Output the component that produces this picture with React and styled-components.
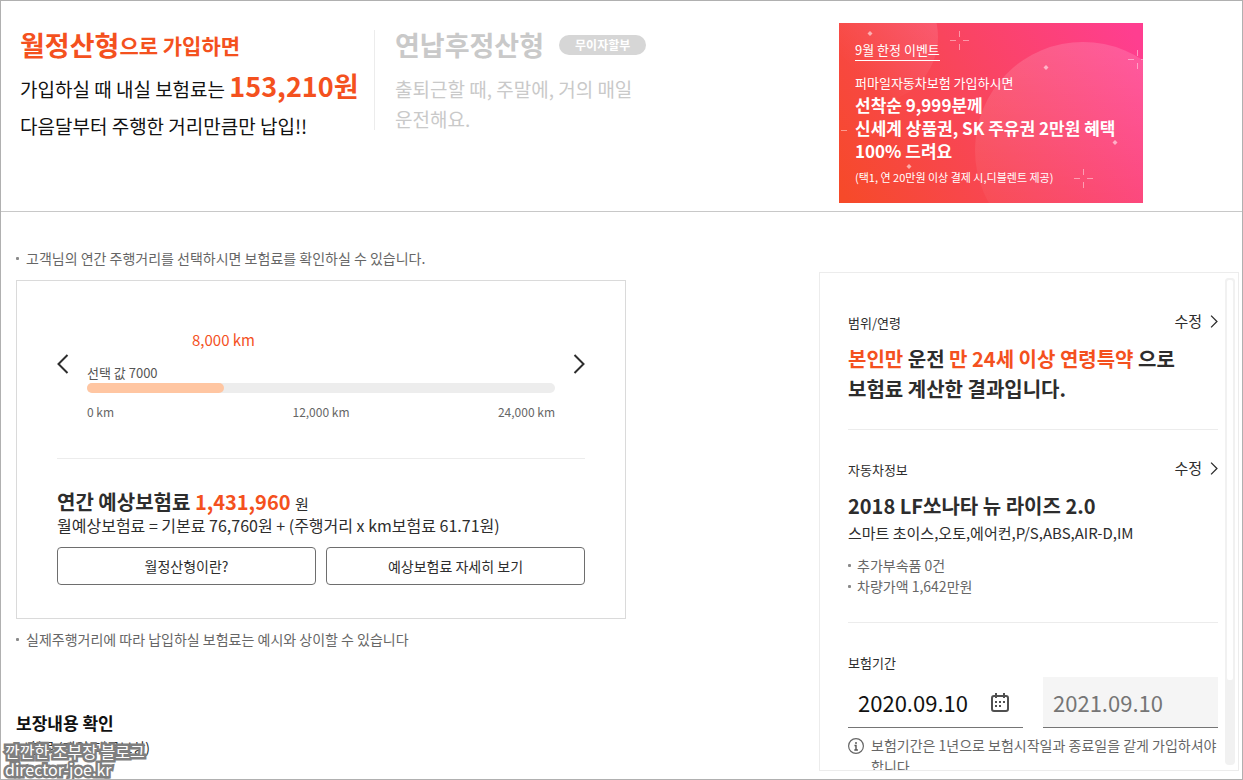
import React, { useState } from "react"
import styled, { ThemeProvider, createGlobalStyle } from "styled-components"

const theme = {
  colors: {
    accent: "#f4511e",
    dark: "#2d2d2d",
    black: "#111111",
    text: "#666666",
    muted: "#c9c9c9",
    border: "#dadada",
    line: "#ececec",
    frame: "#b0b0b0",
  },
}

const GlobalStyle = createGlobalStyle`
  * {
    box-sizing: border-box;
  }

  body {
    margin: 0;
    background: #fff;
  }

  body, button, input {
    font-family: "Noto Sans CJK KR", "Noto Sans", sans-serif;
  }

  h2, h3, p {
    margin: 0;
    padding: 0;
  }
`

const Page = styled.div`
  position: relative;
  display: flex;
  flex-direction: column;
  height: 100vh;
  border: 1px solid ${({ theme }) => theme.colors.frame};
  overflow: hidden;
  color: ${({ theme }) => theme.colors.dark};
`

const Header = styled.header`
  display: flex;
  align-items: flex-start;
  flex-shrink: 0;
  padding: 22px 99px 8px 19px;
  border-bottom: 1px solid #c8c8c8;
`

const Plan = styled.section`
  width: ${({ $wide }) => ($wide ? "354px" : "290px")};
  min-height: 100px;
  margin-top: 7px;
  color: ${({ theme, $off }) => ($off ? theme.colors.muted : theme.colors.black)};
`

const Plans = styled.div`
  display: flex;
  flex: 1;
`

const Divider = styled.div`
  width: 1px;
  height: 100px;
  margin-top: 7px;
  margin-right: 20px;
  background: ${({ theme }) => theme.colors.line};
`

const PlanTitle = styled.h2`
  display: flex;
  align-items: center;
  height: 30px;
  font-size: 27px;
  font-weight: 700;
  line-height: 30px;
  color: ${({ theme, $active }) => ($active ? theme.colors.accent : "inherit")};
`

const PlanSuffix = styled.span`
  font-size: 21px;
  font-weight: 700;
`

const PlanText = styled.p`
  margin-top: ${({ $tall }) => ($tall ? "10px" : "14px")};
  font-size: 19px;
  line-height: ${({ $tall }) => ($tall ? "37px" : "30px")};
`

const Price = styled.strong`
  font-size: 27px;
  font-weight: 700;
  line-height: 30px;
  color: ${({ theme }) => theme.colors.accent};
`

const Badge = styled.span`
  height: 20px;
  margin-left: 15px;
  padding: 0 16px;
  border-radius: 10px;
  background: #d6d6d6;
  color: #fff;
  font-size: 12px;
  font-weight: 700;
  line-height: 20px;
`

const BannerLink = styled.a`
  display: grid;
  flex-shrink: 0;
  width: 304px;
  height: 180px;
  overflow: hidden;
  color: #fff;
  text-decoration: none;
`

const BannerArt = styled.svg`
  grid-area: 1 / 1;
  width: 100%;
  height: 100%;
`

const BannerBody = styled.div`
  grid-area: 1 / 1;
  padding: 17px 16px 0;
  z-index: 1;
`

const BannerTag = styled.p`
  width: max-content;
  border-bottom: 1px solid #fff;
  font-size: 13px;
  line-height: 20px;
`

const BannerLead = styled.p`
  margin-top: 12px;
  font-size: 13px;
  line-height: 20px;
`

const BannerTitle = styled.p`
  font-size: 17px;
  font-weight: 700;
  line-height: 23px;
  white-space: nowrap;
`

const BannerSmall = styled.p`
  margin-top: 5px;
  font-size: 11px;
  line-height: 20px;
`

const Main = styled.main`
  display: flex;
  justify-content: space-between;
  flex: 1;
  min-height: 0;
  padding-left: 15px;
`

const Content = styled.div`
  flex: 0 1 610px;
  padding-top: 36px;
`

const Note = styled.p`
  display: flex;
  align-items: center;
  gap: ${({ $gap }) => $gap || "7px"};
  font-size: 14px;
  line-height: ${({ $height }) => $height || "20px"};
  color: ${({ theme }) => theme.colors.text};

  &::before {
    content: "";
    flex-shrink: 0;
    width: 3px;
    height: 3px;
    border-radius: 1px;
    background: #8a8a8a;
  }
`

const Card = styled.section`
  margin: 12px 0 10px;
  padding: 47px 40px 33px;
  border: 1px solid ${({ theme }) => theme.colors.border};
`

const Picker = styled.div`
  display: flex;
  align-items: flex-start;
  gap: 18px;
  padding-bottom: 36px;
  border-bottom: 1px solid ${({ theme }) => theme.colors.line};
`

const ArrowButton = styled.button`
  width: 12px;
  margin-top: 26px;
  padding: 0;
  border: 0;
  background: none;
  cursor: pointer;

  svg {
    display: block;
  }
`

const Slider = styled.div`
  flex: 1;
`

const Distance = styled.output`
  display: block;
  width: max-content;
  transform: translateX(-50%);
  font-size: 15px;
  line-height: 24px;
  color: ${({ theme }) => theme.colors.accent};
`

const SliderLabel = styled.label`
  display: block;
  margin-top: 11px;
  font-size: 13px;
  line-height: 20px;
  color: #555;
`

const Track = styled.div`
  display: grid;
  height: 10px;
  border-radius: 5px;
  background: #ededed;
`

const Fill = styled.div`
  grid-area: 1 / 1;
  border-radius: 5px;
  background: #ffc6a2;
`

const Range = styled.input`
  grid-area: 1 / 1;
  width: 100%;
  height: 10px;
  margin: 0;
  opacity: 0;
  cursor: pointer;
`

const Scale = styled.div`
  display: grid;
  grid-template-columns: 1fr 1fr 1fr;
  margin-top: 9px;
  font-size: 12px;
  line-height: 20px;
  text-align: center;
  color: ${({ theme }) => theme.colors.text};

  span:first-child {
    text-align: left;
  }

  span:last-child {
    text-align: right;
  }
`

const Estimate = styled.p`
  margin-top: 30px;
  font-size: 20px;
  font-weight: 700;
  line-height: 25px;
`

const Unit = styled.span`
  font-size: 15px;
  font-weight: 400;
  line-height: 1;
`

const Accent = styled.span`
  color: ${({ theme }) => theme.colors.accent};
`

const Formula = styled.p`
  font-size: 16px;
  line-height: 22px;
`

const Buttons = styled.div`
  display: grid;
  grid-template-columns: 1fr 1fr;
  gap: 10px;
  margin-top: 11px;
`

const OutlineButton = styled.button`
  height: 38px;
  border: 1px solid #6e6e6e;
  border-radius: 4px;
  background: #fff;
  color: ${({ theme }) => theme.colors.dark};
  font-size: 14px;
  cursor: pointer;
`

const SectionTitle = styled.h2`
  margin-top: 62px;
  font-size: 17px;
  font-weight: 700;
  line-height: 24px;
  color: ${({ theme }) => theme.colors.black};
`

const SectionText = styled.p`
  margin-top: 2px;
  font-size: 14px;
  line-height: 20px;
`

const Panel = styled.aside`
  display: flex;
  flex: 0 0 420px;
  min-width: 0;
  margin: 60px 3px 8px 0;
  border: 1px solid ${({ theme }) => theme.colors.line};
`

const PanelBody = styled.div`
  flex: 1;
  min-width: 0;
  padding: 10px 7px 0 28px;
  overflow: hidden;
`

const ScrollTrack = styled.div`
  width: 10px;
  margin: 5px 3px 5px 0;
  border-radius: 4px;
  background: #f1f1f1;
`

const ScrollThumb = styled.div`
  height: 83%;
  border: 2px solid #f1f1f1;
  border-radius: 4px;
  background: #fff;
`

const PanelSection = styled.section`
  padding: 28px 0 25px;

  & + & {
    border-top: 1px solid ${({ theme }) => theme.colors.line};
  }
`

const PanelHead = styled.div`
  display: flex;
  align-items: center;
  justify-content: space-between;
  height: 24px;
  padding-bottom: 2px;
  font-size: 13px;
`

const EditButton = styled.button`
  display: flex;
  align-items: center;
  gap: 8px;
  padding: 0 0 2px;
  border: 0;
  background: none;
  color: ${({ theme }) => theme.colors.dark};
  font-size: 15px;
  line-height: 20px;
  cursor: pointer;
`

const PanelTitle = styled.h3`
  margin-top: 9px;
  font-size: 20px;
  font-weight: 700;
  line-height: 30px;
`

const PanelText = styled.p`
  margin: 0 0 10px;
  font-size: 15px;
  line-height: 24px;
`

const Dates = styled.div`
  display: grid;
  grid-template-columns: 1fr 1fr;
  gap: 20px;
  margin-top: 2px;
`

const DateField = styled.div`
  display: flex;
  align-items: center;
  min-width: 0;
  height: 51px;
  padding: 0 13px 0 10px;
  border-bottom: 1px solid #757575;
  background: ${({ $off }) => ($off ? "#f5f5f5" : "#fff")};

  input {
    flex: 1;
    width: 100%;
    min-width: 0;
    padding: 0;
    border: 0;
    background: none;
    color: ${({ $off }) => ($off ? "#757575" : "#111")};
    font-size: 22px;
  }
`

const IconButton = styled.button`
  padding: 0;
  border: 0;
  background: none;
  cursor: pointer;

  svg {
    display: block;
  }
`

const Info = styled.p`
  display: flex;
  gap: 7px;
  margin-top: 7px;
  font-size: 14px;
  line-height: 21px;
  color: ${({ theme }) => theme.colors.text};

  svg {
    flex-shrink: 0;
    margin-top: 3px;
  }

  span {
    white-space: nowrap;
  }
`

const Watermark = styled.div`
  position: absolute;
  left: 4px;
  bottom: 1px;
  color: #fff;
  font-family: "Noto Sans CJK KR", sans-serif;
  font-size: 16px;
  line-height: 18px;
  -webkit-text-stroke: 5px #7f7f7f;
  stroke-linejoin: round;
  paint-order: stroke fill;
`

const Chevron = ({ left, width, height }) => (
  <svg width={width} height={height} viewBox="0 0 12 20" fill="none" aria-hidden="true">
    <path d={left ? "M10.5 1 L1.5 10 L10.5 19" : "M1.5 1 L10.5 10 L1.5 19"} stroke="#2d2d2d" strokeWidth="2" />
  </svg>
)

const CalendarIcon = () => (
  <svg width="20" height="20" viewBox="0 0 20 20" fill="none" aria-hidden="true">
    <rect x="2" y="4" width="16" height="15" rx="2" stroke="#505050" strokeWidth="2" />
    <path d="M6 1v5M14 1v5" stroke="#505050" strokeWidth="2" />
    <path d="M9 10h2M13 10h2M5 10h2M5 14h2M9 14h2" stroke="#505050" strokeWidth="2" />
  </svg>
)

const InfoIcon = () => (
  <svg width="16" height="16" viewBox="0 0 16 16" fill="none" aria-hidden="true">
    <circle cx="8" cy="8" r="7.4" stroke="#666" strokeWidth="1.2" />
    <path d="M8 4v2M6.5 7.5H8V12M6.3 12h3.6" stroke="#555" strokeWidth="1.4" />
  </svg>
)

const sparkles = [
  [120, 17],
  [298, 36],
  [244, 155],
  [-2, 107],
]

const dots = [
  [31, 10],
  [207, 44],
  [276, 119],
  [70, 143],
]

const Banner = () => (
  <BannerLink href="#event">
    <BannerArt viewBox="0 0 304 180" preserveAspectRatio="none" aria-hidden="true">
      <defs>
        <linearGradient id="bannerBg" gradientUnits="userSpaceOnUse" x1="0" y1="170" x2="290" y2="0">
          <stop offset="0" stopColor="#f64a29" />
          <stop offset="0.5" stopColor="#f9455d" />
          <stop offset="1" stopColor="#ff3e90" />
        </linearGradient>
        <linearGradient id="bannerGlow" x1="0" y1="1" x2="1" y2="0">
          <stop offset="0.3" stopColor="#fff" stopOpacity="0" />
          <stop offset="1" stopColor="#fff" stopOpacity="0.16" />
        </linearGradient>
        <linearGradient id="bannerMoon" x1="0" y1="0" x2="0" y2="1">
          <stop offset="0" stopColor="#fff" stopOpacity="0.15" />
          <stop offset="0.8" stopColor="#fff" stopOpacity="0.03" />
        </linearGradient>
      </defs>
      <rect width="304" height="180" fill="url(#bannerBg)" />
      <circle cx="33" cy="14" r="66" fill="url(#bannerGlow)" />
      <circle cx="244" cy="127" r="108" fill="url(#bannerMoon)" />
      {sparkles.map(([x, y]) => (
        <path
          key={`${x}-${y}`}
          d={`M${x - 9} ${y + 0.5}h6M${x + 4} ${y + 0.5}h6M${x + 0.5} ${y - 9}v6M${x + 0.5} ${y + 4}v6`}
          stroke="#fff"
          strokeOpacity="0.45"
        />
      ))}
      {dots.map(([x, y]) => (
        <path key={`${x}-${y}`} d={`M${x} ${y - 2}l2.5 2.5l-2.5 2.5l-2.5 -2.5z`} fill="#fff" fillOpacity="0.55" />
      ))}
    </BannerArt>
    <BannerBody>
      <BannerTag>9월 한정 이벤트</BannerTag>
      <BannerLead>퍼마일자동차보험 가입하시면</BannerLead>
      <BannerTitle>
        선착순 9,999분께<br />
        신세계 상품권, SK 주유권 2만원 혜택<br />
        100% 드려요
      </BannerTitle>
      <BannerSmall>(택1, 연 20만원 이상 결제 시,디블렌트 제공)</BannerSmall>
    </BannerBody>
  </BannerLink>
)

const MAX = 24000

const DistanceCard = () => {
  const [value, setValue] = useState(7000)
  const percent = `${(value / MAX) * 100}%`
  const move = (step) => setValue(Math.min(MAX, Math.max(0, value + step)))

  return (
    <Card>
      <Picker>
        <ArrowButton type="button" aria-label="이전" onClick={() => move(-1000)}>
          <Chevron left width="12" height="20" />
        </ArrowButton>
        <Slider>
          <Distance htmlFor="distance" style={{ marginLeft: percent }}>
            {(value + 1000).toLocaleString("en-US")} km
          </Distance>
          <SliderLabel htmlFor="distance">선택 값 {value}</SliderLabel>
          <Track>
            <Fill style={{ width: percent }} />
            <Range
              id="distance"
              type="range"
              min="0"
              max={MAX}
              step="1000"
              value={value}
              onChange={(e) => setValue(Number(e.target.value))}
            />
          </Track>
          <Scale>
            <span>0 km</span>
            <span>12,000 km</span>
            <span>24,000 km</span>
          </Scale>
        </Slider>
        <ArrowButton type="button" aria-label="다음" onClick={() => move(1000)}>
          <Chevron width="12" height="20" />
        </ArrowButton>
      </Picker>
      <Estimate>
        연간 예상보험료 <Accent>1,431,960</Accent> <Unit>원</Unit>
      </Estimate>
      <Formula>월예상보험료 = 기본료 76,760원 + (주행거리 x km보험료 61.71원)</Formula>
      <Buttons>
        <OutlineButton type="button">월정산형이란?</OutlineButton>
        <OutlineButton type="button">예상보험료 자세히 보기</OutlineButton>
      </Buttons>
    </Card>
  )
}

const Edit = () => (
  <EditButton type="button">
    수정
    <Chevron width="8" height="13" />
  </EditButton>
)

const SummaryPanel = () => (
  <Panel>
    <PanelBody>
      <PanelSection>
        <PanelHead>
          범위/연령
          <Edit />
        </PanelHead>
        <PanelTitle>
          <Accent>본인만</Accent> 운전 <Accent>만 24세 이상 연령특약</Accent> 으로<br />
          보험료 계산한 결과입니다.
        </PanelTitle>
      </PanelSection>
      <PanelSection>
        <PanelHead>
          자동차정보
          <Edit />
        </PanelHead>
        <PanelTitle>2018 LF쏘나타 뉴 라이즈 2.0</PanelTitle>
        <PanelText>스마트 초이스,오토,에어컨,P/S,ABS,AIR-D,IM</PanelText>
        <Note $gap="6px" $height="21px">추가부속품 0건</Note>
        <Note $gap="6px" $height="21px">차량가액 1,642만원</Note>
      </PanelSection>
      <PanelSection>
        <PanelHead>
          <label htmlFor="startDate">보험기간</label>
        </PanelHead>
        <Dates>
          <DateField>
            <input id="startDate" type="text" defaultValue="2020.09.10" />
            <IconButton type="button" aria-label="달력">
              <CalendarIcon />
            </IconButton>
          </DateField>
          <DateField $off>
            <input type="text" aria-label="보험 종료일" value="2021.09.10" readOnly />
          </DateField>
        </Dates>
        <Info>
          <InfoIcon />
          <span>
            보험기간은 1년으로 보험시작일과 종료일을 같게 가입하셔야<br />
            합니다
          </span>
        </Info>
      </PanelSection>
    </PanelBody>
    <ScrollTrack>
      <ScrollThumb />
    </ScrollTrack>
  </Panel>
)

const App = () => (
  <ThemeProvider theme={theme}>
    <GlobalStyle />
    <Page>
      <Header>
        <Plans>
          <Plan $wide>
            <PlanTitle $active>
              월정산형<PlanSuffix>으로 가입하면</PlanSuffix>
            </PlanTitle>
            <PlanText $tall>
              가입하실 때 내실 보험료는 <Price>153,210원</Price><br />
              다음달부터 주행한 거리만큼만 납입!!
            </PlanText>
          </Plan>
          <Divider />
          <Plan $off>
            <PlanTitle>
              연납후정산형<Badge>무이자할부</Badge>
            </PlanTitle>
            <PlanText>
              출퇴근할 때, 주말에, 거의 매일<br />
              운전해요.
            </PlanText>
          </Plan>
        </Plans>
        <Banner />
      </Header>
      <Main>
        <Content>
          <Note>고객님의 연간 주행거리를 선택하시면 보험료를 확인하실 수 있습니다.</Note>
          <DistanceCard />
          <Note>실제주행거리에 따라 납입하실 보험료는 예시와 상이할 수 있습니다</Note>
          <SectionTitle>보장내용 확인</SectionTitle>
          <SectionText>보험료 (대인/대물보상)</SectionText>
        </Content>
        <SummaryPanel />
      </Main>
      <Watermark>
        깐깐한 조부장 블로그<br />
        director-joe.kr
      </Watermark>
    </Page>
  </ThemeProvider>
)

export default App
